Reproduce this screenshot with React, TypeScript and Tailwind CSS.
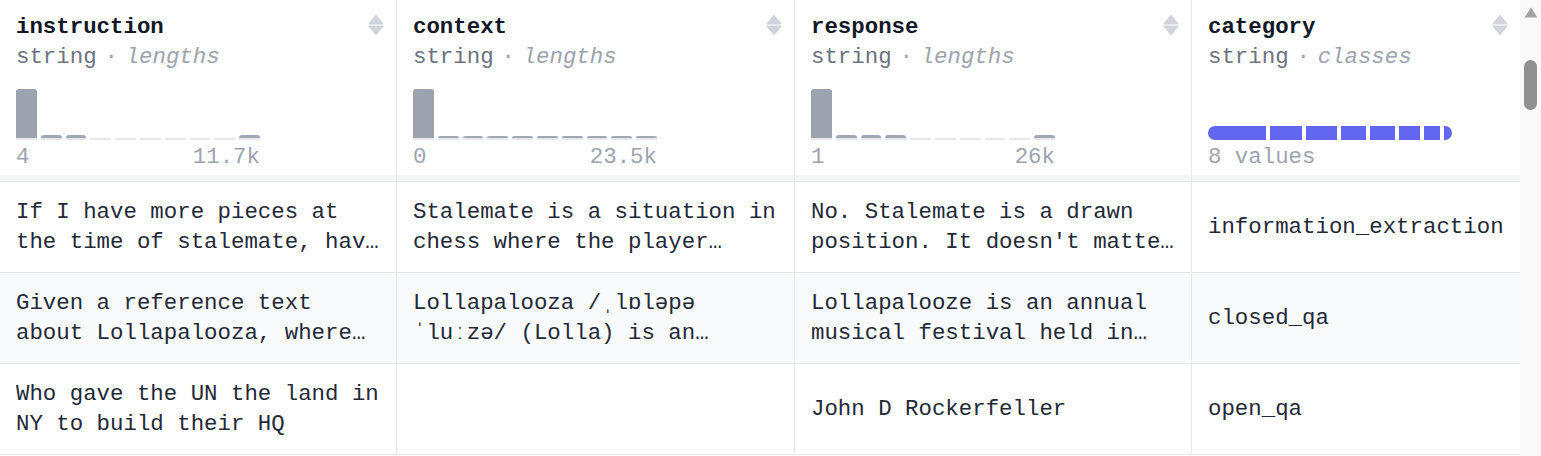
import React from 'react'

type Column = {
  name: string
  kind: string
  bins?: number[]
  min?: string
  max?: string
  width: string
}

const columns: Column[] = [
  { name: 'instruction', kind: 'lengths', bins: [49, 3, 3, 0, 0, 0, 0, 0, 0, 3], min: '4', max: '11.7k', width: 'w-[397px]' },
  { name: 'context', kind: 'lengths', bins: [49, 2, 2, 2, 2, 2, 2, 2, 2, 2], min: '0', max: '23.5k', width: 'w-[398px]' },
  { name: 'response', kind: 'lengths', bins: [49, 3, 3, 3, 0, 0, 0, 0, 0, 3], min: '1', max: '26k', width: 'w-[397px]' },
  { name: 'category', kind: 'classes', width: 'w-[328px]' },
]

const rows: React.ReactNode[][] = [
  [
    'If I have more pieces at the time of stalemate, have I won?',
    'Stalemate is a situation in chess where the player whose turn it is to move is not in check and has no legal move.',
    "No. Stalemate is a drawn position. It doesn't matter who has captured more pieces or is in a winning position",
    'information_extraction',
  ],
  [
    'Given a reference text about Lollapalooza, where does it take place, who started it and what is it?',
    <>Lollapalooza /ˌlɒləpə<wbr />ˈluːzə/ (Lolla) is an annual American four-day music festival held in Grant Park in Chicago.</>,
    'Lollapalooze is an annual musical festival held in Grant Park in Chicago, Illinois.',
    'closed_qa',
  ],
  ['Who gave the UN the land in NY to build their HQ', '', 'John D Rockerfeller', 'open_qa'],
]

const segments = [58, 32, 31, 25, 25, 21, 16, 8]

function SortIcon() {
  return (
    <svg width="16" height="22" viewBox="0 0 16 22" className="mt-[2px] shrink-0">
      <path d="M8 0.5 L15.5 9.5 Q16 10.5 15 10.5 L1 10.5 Q0 10.5 0.5 9.5 Z" fill="#d1d5db" />
      <path d="M8 21.5 L15.5 12.5 Q16 11.5 15 11.5 L1 11.5 Q0 11.5 0.5 12.5 Z" fill="#d1d5db" />
    </svg>
  )
}

function Histogram({ bins }: { bins: number[] }) {
  return (
    <div className="flex h-[52px] w-[244px] items-end gap-[4px]">
      {bins.map((h, i) => (
        <div key={i} className="flex flex-1 flex-col justify-end">
          {h > 0 && (
            <div
              className={h > 10 ? 'rounded-t-[3px] bg-[#9ca3af]' : 'rounded-t-full bg-[#a1a7b3]'}
              style={{ height: h }}
            />
          )}
          <div className="h-[2px] bg-[#e5e7eb]" />
        </div>
      ))}
    </div>
  )
}

function CategoryBar() {
  return (
    <div className="flex h-[52px] items-end">
      <div className="flex h-[14px] gap-[4px]">
        {segments.map((w, i) => (
          <div
            key={i}
            className={
              i === 0
                ? 'h-full rounded-l-full bg-[#6366f1]'
                : i === segments.length - 1
                  ? 'h-full rounded-r-full bg-[#6366f1]'
                  : 'h-full bg-[#6366f1]'
            }
            style={{ width: w }}
          />
        ))}
      </div>
    </div>
  )
}

function HeaderCell({ col }: { col: Column }) {
  return (
    <div className={`${col.width} flex h-[175px] flex-col border-r border-[#e5e7eb] pt-[12px] pl-[16px] pr-[12px] last:border-r-0`}>
      <div className="flex h-[30px] items-start justify-between">
        <span className="font-bold text-[#111827]">{col.name}</span>
        <SortIcon />
      </div>
      <div className="flex h-[30px] items-baseline whitespace-nowrap">
        <span className="text-[#6b7280]">string</span>
        <span className="w-[29px] text-center text-[#9ca3af]">·</span>
        <span className="italic text-[#9ca3af]">{col.kind}</span>
      </div>
      <div className="mt-[16px]">
        {col.bins ? <Histogram bins={col.bins} /> : <CategoryBar />}
      </div>
      <div className="mt-[2px] h-[30px] text-[#9ca3af]">
        {col.bins ? (
          <div className="flex w-[244px] justify-between">
            <span>{col.min}</span>
            <span>{col.max}</span>
          </div>
        ) : (
          <span>8 values</span>
        )}
      </div>
    </div>
  )
}

export default function App() {
  return (
    <div
      className="flex h-[456px] w-[1541px] overflow-hidden bg-white text-[22.4px] leading-[30px]"
      style={{ fontFamily: '"Liberation Mono", "DejaVu Sans Mono", monospace' }}
    >
      <div className="flex w-[1520px] flex-col">
        <div className="flex">
          {columns.map(col => (
            <HeaderCell key={col.name} col={col} />
          ))}
        </div>
        <div className="flex h-[7px] border-b border-[#e5e7eb] bg-gradient-to-b from-[#f1f2f4] to-[#f7f8f9]">
          {columns.map(col => (
            <div key={col.name} className={`${col.width} border-r border-[#e5e7eb] last:border-r-0`} />
          ))}
        </div>
        {rows.map((row, ri) => (
          <div
            key={ri}
            className={`flex h-[91px] border-b border-[#e5e7eb] ${ri === 1 ? 'bg-[#f9fafb]' : 'bg-white'}`}
          >
            {row.map((cell, ci) => (
              <div
                key={ci}
                className={`${columns[ci].width} flex items-center border-r border-[#e5e7eb] px-[16px] text-[#1f2937] last:border-r-0`}
              >
                <div className="line-clamp-2 break-words">{cell}</div>
              </div>
            ))}
          </div>
        ))}
      </div>
      <div className="flex w-[21px] flex-col items-center bg-[#f9f9f9]">
        <svg width="14" height="11" viewBox="0 0 14 11" className="mt-[7px]">
          <path d="M7 0.5 L13.5 10.5 L0.5 10.5 Z" fill="#a3a3a3" />
        </svg>
        <div className="mt-[42px] h-[50px] w-[13px] rounded-full bg-[#909090]" />
      </div>
    </div>
  )
}
